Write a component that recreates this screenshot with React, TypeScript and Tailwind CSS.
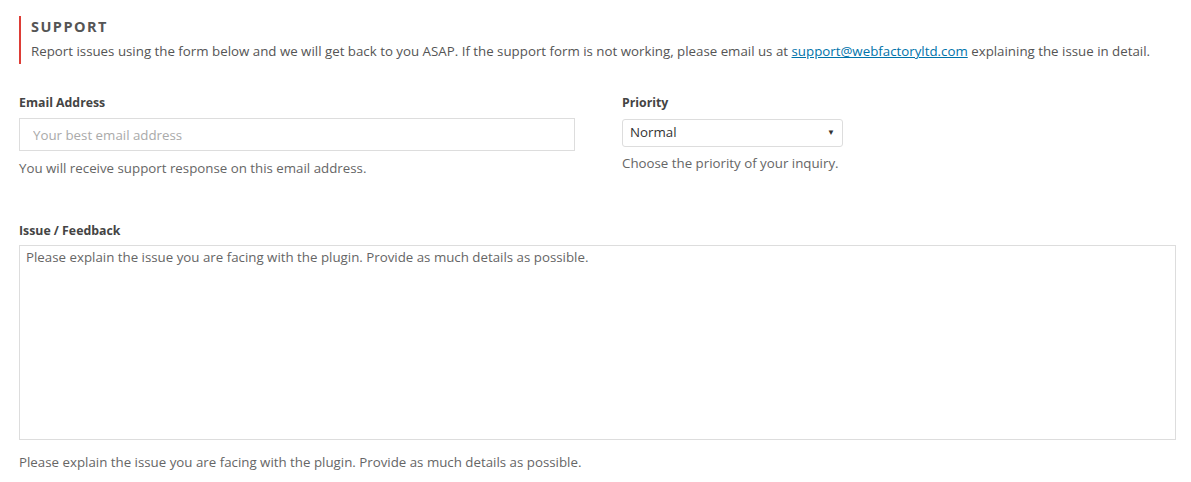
export default function App() {
  return (
    <div className="min-h-[482px] bg-white text-[13.3px] text-[#555] font-['Open_Sans',sans-serif] pl-[19px] pr-[15px] pt-[16px]">
      {/* header */}
      <div className="border-l-2 border-[#dd3d36] pl-[10px]">
        <h2 className="text-[14.5px] font-bold tracking-[0.1em] text-[#555] leading-[20px] pt-[1px]">SUPPORT</h2>
        <p className="mt-[2px] leading-[25px] text-[#555]">
          Report issues using the form below and we will get back to you ASAP. If the support form is not working, please email us at{" "}
          <a href="#" className="text-[#0073aa] underline">support@webfactoryltd.com</a> explaining the issue in detail.
        </p>
      </div>

      <div className="flex mt-[31px]">
        <div className="w-[556px]">
          <label className="block text-[12.3px] font-bold text-[#444] leading-[16px]">Email Address</label>
          <input
            type="text"
            placeholder="Your best email address"
            className="mt-[7px] block w-full h-[33px] border border-[#ddd] px-[13px] text-[13.3px] outline-none placeholder:text-[#aaa]"
          />
          <p className="mt-[8px] leading-[18px] text-[#666]">You will receive support response on this email address.</p>
        </div>
        <div className="ml-[47px] w-[221px]">
          <label className="block text-[12.3px] font-bold text-[#444] leading-[16px]">Priority</label>
          <div className="relative mt-[8px] h-[28px] border border-[#ddd] rounded-[3px] flex items-center px-[7px] text-[#333]">
            Normal
            <span className="absolute right-[7px] top-[6px] text-[8px] text-[#333]">▼</span>
          </div>
          <p className="mt-[7px] leading-[18px] text-[#666]">Choose the priority of your inquiry.</p>
        </div>
      </div>

      <div className="mt-[46px]">
        <label className="block text-[12.3px] font-bold text-[#444] leading-[16px]">Issue / Feedback</label>
        <textarea
          placeholder="Please explain the issue you are facing with the plugin. Provide as much details as possible."
          className="mt-[6px] block w-full h-[195px] border border-[#ddd] px-[6px] py-[2px] text-[13.3px] resize-none outline-none placeholder:text-[#666]"
        />
        <p className="mt-[13px] leading-[18px] text-[#666]">Please explain the issue you are facing with the plugin. Provide as much details as possible.</p>
      </div>
    </div>
  );
}
